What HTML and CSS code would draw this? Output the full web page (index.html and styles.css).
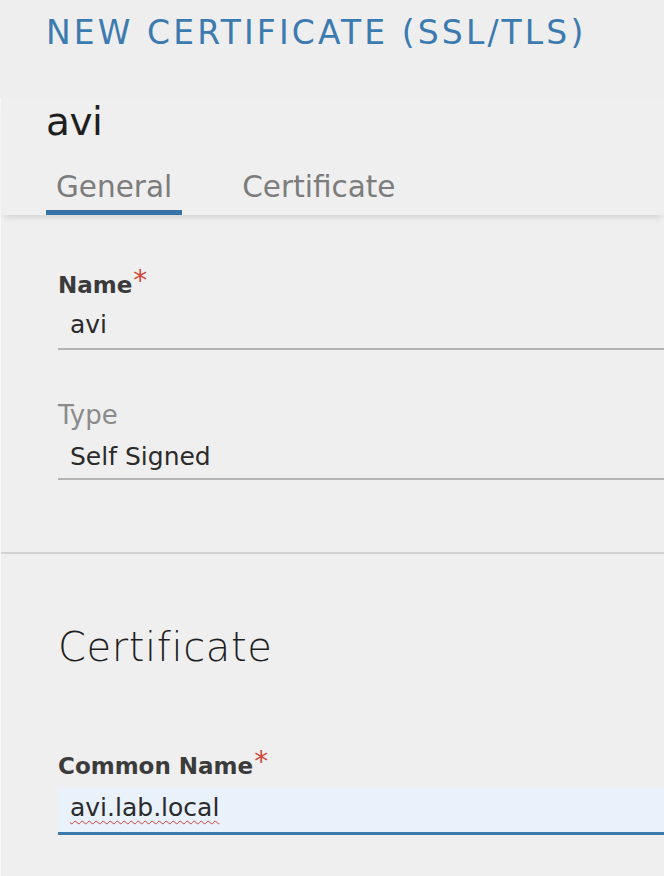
FILE: index.html
```html
<!DOCTYPE html>
<html lang="en">
<head>
<meta charset="utf-8">
<title>New Certificate (SSL/TLS)</title>
<link rel="stylesheet" href="styles.css">
</head>
<body>
  <h1 class="modal-title">NEW CERTIFICATE (SSL/TLS)</h1>
  <div class="panel">
    <div class="panel-header">
      <div class="obj-name">avi</div>
      <nav class="tabs">
        <span class="tab active">General</span>
        <span class="tab">Certificate</span>
      </nav>
    </div>
    <div class="form-section">
      <div class="field field-name">
        <label class="label required">Name</label>
        <div class="input">avi</div>
      </div>
      <div class="field field-type">
        <label class="label light">Type</label>
        <div class="input">Self Signed</div>
      </div>
    </div>
    <div class="divider"></div>
    <div class="form-section cert">
      <h2 class="section-title">Certificate</h2>
      <div class="field field-cn">
        <label class="label required">Common Name</label>
        <div class="input focused"><span class="spell">avi.lab.local</span></div>
      </div>
    </div>
  </div>
</body>
</html>
```
FILE: styles.css
```css
html, body {
  margin: 0;
  padding: 0;
  background: #eeeeee;
  font-family: "DejaVu Sans", "Open Sans", sans-serif;
  color: #2b2b2b;
  overflow: hidden;
}

.modal-title {
  margin: 0;
  height: 98px;
  box-sizing: border-box;
  padding: 13px 0 0 46px;
  font-size: 33px;
  line-height: 40px;
  font-weight: 400;
  color: #3c7bb0;
  letter-spacing: 3.1px;
}

.panel {
  border-left: 1px solid #f8f8f8;
  background: #efefef;
  min-height: 790px;
}

.panel-header {
  padding: 0 0 0 45px;
  box-shadow: 0 5px 7px -3px rgba(0,0,0,0.13);
  height: 117px;
  box-sizing: border-box;
}

.obj-name {
  font-size: 39px;
  line-height: 44px;
  padding-top: 2px;
  color: #1f1f1f;
  letter-spacing: -0.5px;
}

.tabs {
  display: flex;
  gap: 50px;
  margin-top: 25px;
}

.tab {
  font-size: 29.5px;
  line-height: 36px;
  color: #7c7c7c;
  padding: 0 10px 5px;
  border-bottom: 5px solid transparent;
}

.tab.active {
  border-bottom-color: #3673a7;
}

.form-section {
  padding: 55px 0 0 57px;
}

.label {
  display: block;
  font-size: 23px;
  line-height: 28px;
  font-weight: 700;
  color: #3b3b3b;
}

.label.light {
  font-weight: 400;
  font-size: 26px;
  color: #8b8b8b;
}

.label.required::after {
  content: "*";
  color: #d0493a;
  font-size: 28px;
  font-weight: 400;
  position: relative;
  top: -3px;
  margin-left: 1px;
}

.input {
  margin-top: 8px;
  padding: 0 12px 5px;
  font-size: 25px;
  line-height: 36px;
  color: #2b2b2b;
  border-bottom: 2px solid #b4b4b4;
}

.field-type {
  margin-top: 51px;
}

.field-type .input {
  margin-top: 10px;
  padding-bottom: 3px;
}

.input.focused {
  background: #e9f1fb;
  border-bottom: 3px solid #3b7aab;
  line-height: 40px;
  padding-top: 0;
  padding-bottom: 4px;
}

.spell {
  text-decoration: underline wavy #d9403a;
  text-decoration-thickness: 1px;
  text-underline-offset: 4px;
}

.divider {
  margin-top: 72px;
  height: 2px;
  background: #d2d2d2;
}

.form-section.cert {
  padding-top: 69px;
}

.section-title {
  margin: 0 0 80px;
  font-size: 40px;
  line-height: 48px;
  font-weight: 200;
  color: #1f1f1f;
  letter-spacing: 0.6px;
}
```
